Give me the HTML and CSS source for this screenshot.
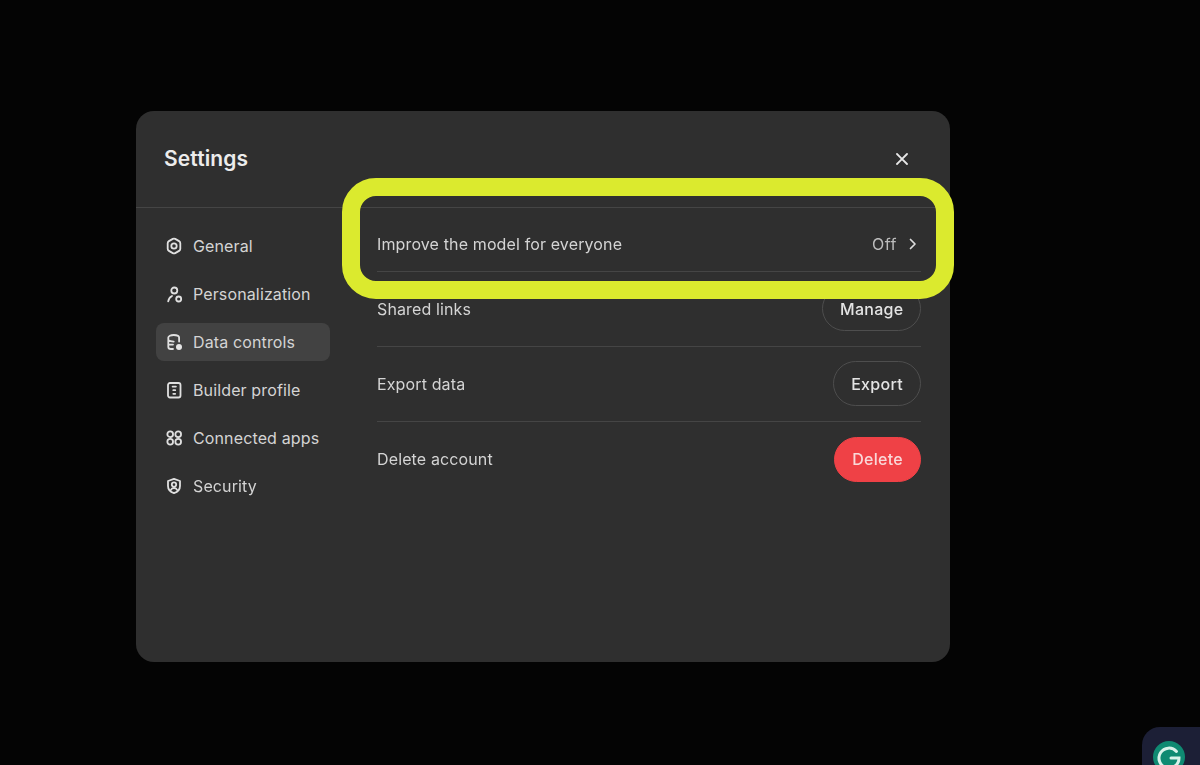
FILE: index.html
```html
<!DOCTYPE html>
<html lang="en">
<head>
<meta charset="utf-8">
<title>Settings</title>
<link rel="stylesheet" href="styles.css">
</head>
<body>
<main class="stage">
  <section class="dialog">
    <header class="dialog-head">
      <h1 class="title">Settings</h1>
      <button class="close" aria-label="Close">
        <svg viewBox="0 0 16 16" width="16" height="16"><path d="M3 3l10 10M13 3L3 13"/></svg>
      </button>
    </header>
    <div class="dialog-body">
      <nav class="side">
        <a class="nav-item">
          <svg class="ico" viewBox="0 0 18 18"><path d="M7.800 1.900a2.400 2.400 0 0 1 2.400 0l3.900 2.250a2.400 2.400 0 0 1 1.200 2.080v5.540a2.400 2.400 0 0 1-1.200 2.080l-3.900 2.250a2.400 2.400 0 0 1-2.400 0l-3.900-2.250a2.400 2.400 0 0 1-1.200-2.080V6.230a2.400 2.400 0 0 1 1.200-2.080z"/><circle cx="9" cy="9" r="2.700"/></svg>
          <span>General</span>
        </a>
        <a class="nav-item">
          <svg class="ico" viewBox="0 0 18 18"><circle cx="9.300" cy="5.500" r="3"/><circle cx="13.700" cy="14" r="2.500"/><path d="M3.200 16.400c.3-2.200 1.500-4.200 3.800-5.400"/></svg>
          <span>Personalization</span>
        </a>
        <a class="nav-item active">
          <svg class="ico" viewBox="0 0 18 18"><path d="M8 16H5.800c-1.400 0-2.500-1-2.500-2.300V4.600c0-1.400 2.300-2.600 5.400-2.600s5.400 1.200 5.400 2.600v4M3.300 7.300c1.200.9 3.200 1.300 5.400 1.300M3.300 11.600H8"/><circle class="solid" cx="14" cy="14" r="3"/></svg>
          <span>Data controls</span>
        </a>
        <a class="nav-item">
          <svg class="ico" viewBox="0 0 18 18"><rect x="3" y="2" width="12.500" height="14.500" rx="2"/><path d="M7.600 5.600h3.300M8.300 9.200h1.900M8.300 12.800h1.900"/></svg>
          <span>Builder profile</span>
        </a>
        <a class="nav-item">
          <svg class="ico" viewBox="0 0 18 18"><circle cx="5.200" cy="5.200" r="2.850"/><circle cx="13.200" cy="5.200" r="2.850"/><circle cx="5.200" cy="12.800" r="2.850"/><circle cx="13.200" cy="12.800" r="2.850"/></svg>
          <span>Connected apps</span>
        </a>
        <a class="nav-item">
          <svg class="ico" viewBox="0 0 18 18"><path d="M9 1.800l6 2.200v5c0 3.600-2.400 6-6 7.200-3.600-1.200-6-3.600-6-7.200V4z"/><circle cx="9" cy="7.600" r="2.200"/><path d="M5.800 13c.6-1.400 1.800-2 3.200-2s2.600.6 3.200 2"/></svg>
          <span>Security</span>
        </a>
      </nav>
      <div class="panel">
        <div class="row row-first">
          <span>Improve the model for everyone</span>
          <span class="value">Off
            <svg class="chev" viewBox="0 0 12 12" width="12" height="12"><path d="M3.500 1.500L8 6l-4.500 4.500"/></svg>
          </span>
        </div>
        <div class="row">
          <span>Shared links</span>
          <button class="btn btn-manage">Manage</button>
        </div>
        <div class="row">
          <span>Export data</span>
          <button class="btn">Export</button>
        </div>
        <div class="row row-last">
          <span>Delete account</span>
          <button class="btn danger">Delete</button>
        </div>
      </div>
    </div>
    <div class="highlight"></div>
  </section>
</main>
<div class="grammarly">
  <span class="g-disc">
    <svg viewBox="0 0 32 32" width="32" height="32"><path d="M23.500 10.500A10 10 0 1 0 26 17h-8"/></svg>
  </span>
</div>
</body>
</html>
```
FILE: styles.css
```css
* { box-sizing: border-box; }
html, body { margin: 0; height: 100%; }
body {
  background: #040404;
  color: #e6e6e6;
  font-family: Inter, "Liberation Sans", sans-serif;
  overflow: hidden;
}
.stage { padding: 111px 0 0 136px; }
.dialog {
  position: relative;
  width: 814px;
  height: 551px;
  background: #2f2f2f;
  border-radius: 18px;
  display: flex;
  flex-direction: column;
  filter: blur(0.35px);
}
.dialog-head {
  height: 97px;
  flex: none;
  display: flex;
  align-items: center;
  justify-content: space-between;
  padding: 0 40px 2px 28px;
  border-bottom: 1px solid #454545;
}
.title {
  margin: 0;
  font-size: 21px;
  font-weight: 600;
  letter-spacing: 0.1px;
  color: #ececec;
}
.close {
  background: none;
  border: 0;
  padding: 0;
  width: 16px;
  height: 16px;
  display: flex;
  position: relative;
  top: 1px;
}
.close path {
  fill: none;
  stroke: #e8e8e8;
  stroke-width: 1.800;
  stroke-linecap: round;
}
.dialog-body { display: flex; flex: 1; }
.side {
  width: 241px;
  flex: none;
  padding: 19px 0 0 20px;
  display: flex;
  flex-direction: column;
  gap: 10px;
}
.nav-item {
  width: 174px;
  height: 38px;
  display: flex;
  align-items: center;
  gap: 10px;
  padding-left: 9px;
  border-radius: 8px;
  font-size: 16px;
  letter-spacing: 0.13px;
  color: #d4d4d4;
}
.nav-item.active { background: #424242; }
.ico {
  width: 18px;
  height: 18px;
  flex: none;
  fill: none;
  stroke: #e0e0e0;
  stroke-width: 1.800;
  stroke-linecap: round;
  stroke-linejoin: round;
}
.ico .solid { fill: #e6e6e6; stroke: none; }
.panel { width: 544px; padding-top: 9px; }
.row {
  height: 75px;
  padding-bottom: 1px;
  display: flex;
  align-items: center;
  justify-content: space-between;
  border-bottom: 1px solid #454545;
  font-size: 16px;
  letter-spacing: 0.13px;
  color: #d4d4d4;
}
.row-first { height: 55px; padding-bottom: 0; }
.row-last { border-bottom: 0; }
.value {
  display: flex;
  align-items: center;
  gap: 10px;
  letter-spacing: 0.5px;
  color: #bcbcbc;
  padding-right: 2px;
}
.chev path {
  fill: none;
  stroke: #dcdcdc;
  stroke-width: 1.700;
  stroke-linecap: round;
  stroke-linejoin: round;
}
.btn {
  height: 45px;
  padding: 0 17px;
  background: none;
  border: 1px solid #4e4e4e;
  border-radius: 23px;
  font: 500 16px Inter, "Liberation Sans", sans-serif;
  letter-spacing: 0.3px;
  color: #e4e4e4;
}
.btn-manage { padding: 0 16.500px; }
.btn.danger {
  background: #ef4146;
  border-color: #ef4146;
  color: #f9d8d8;
}
.highlight {
  position: absolute;
  left: 206px;
  top: 67px;
  width: 612px;
  height: 121px;
  border: 18px solid #dbea2e;
  border-radius: 34px;
  pointer-events: none;
}
.grammarly {
  position: fixed;
  right: 0;
  bottom: 0;
  width: 58px;
  height: 38px;
  padding: 14px 0 0 11px;
  background: #1c1f36;
  border-top-left-radius: 18px;
}
.g-disc {
  display: block;
  width: 32px;
  height: 32px;
  border-radius: 50%;
  background: #0f8a72;
}
.g-disc path {
  fill: none;
  stroke: #d8f2ea;
  stroke-width: 3;
  stroke-linecap: round;
}
```
